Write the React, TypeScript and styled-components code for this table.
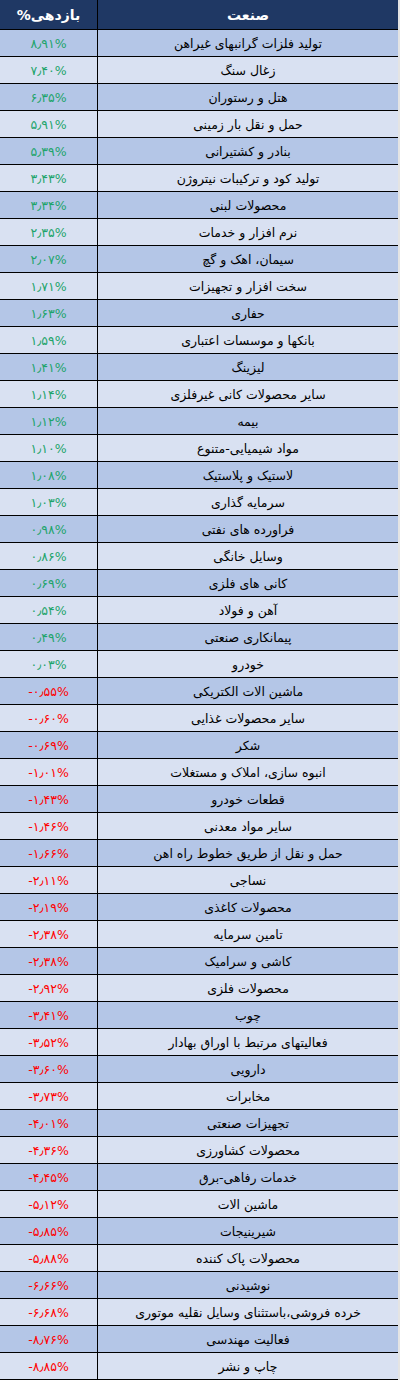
import styled, { createGlobalStyle } from "styled-components";

const rows: [string, number][] = [
  ["تولید فلزات گرانبهای غیراهن", 8.91],
  ["زغال سنگ", 7.4],
  ["هتل و رستوران", 6.35],
  ["حمل و نقل بار زمینی", 5.91],
  ["بنادر و کشتیرانی", 5.39],
  ["تولید کود و ترکیبات نیتروژن", 3.43],
  ["محصولات لبنی", 3.34],
  ["نرم افزار و خدمات", 2.35],
  ["سیمان، اهک و گچ", 2.07],
  ["سخت افزار و تجهیزات", 1.71],
  ["حفاری", 1.63],
  ["بانکها و موسسات اعتباری", 1.59],
  ["لیزینگ", 1.41],
  ["سایر محصولات کانی غیرفلزی", 1.14],
  ["بیمه", 1.12],
  ["مواد شیمیایی-متنوع", 1.1],
  ["لاستیک و پلاستیک", 1.08],
  ["سرمایه گذاری", 1.03],
  ["فراورده های نفتی", 0.98],
  ["وسایل خانگی", 0.86],
  ["کانی های فلزی", 0.69],
  ["آهن و فولاد", 0.54],
  ["پیمانکاری صنعتی", 0.49],
  ["خودرو", 0.03],
  ["ماشین الات الکتریکی", -0.55],
  ["سایر محصولات غذایی", -0.6],
  ["شکر", -0.69],
  ["انبوه سازی، املاک و مستغلات", -1.01],
  ["قطعات خودرو", -1.43],
  ["سایر مواد معدنی", -1.46],
  ["حمل و نقل از طریق خطوط راه اهن", -1.66],
  ["نساجی", -2.11],
  ["محصولات کاغذی", -2.19],
  ["تامین سرمایه", -2.38],
  ["کاشی و سرامیک", -2.38],
  ["محصولات فلزی", -2.92],
  ["چوب", -3.41],
  ["فعالیتهای مرتبط با اوراق بهادار", -3.52],
  ["دارویی", -3.6],
  ["مخابرات", -3.73],
  ["تجهیزات صنعتی", -4.01],
  ["محصولات کشاورزی", -4.36],
  ["خدمات رفاهی-برق", -4.45],
  ["ماشین الات", -5.12],
  ["شیرینیجات", -5.85],
  ["محصولات پاک کننده", -5.88],
  ["نوشیدنی", -6.66],
  ["خرده فروشی،باستثنای وسایل نقلیه موتوری", -6.68],
  ["فعالیت مهندسی", -8.76],
  ["چاپ و نشر", -8.85],
];

const faDigits = "۰۱۲۳۴۵۶۷۸۹";

function formatPct(v: number) {
  const s = Math.abs(v)
    .toFixed(2)
    .replace(/\d/g, (d) => faDigits[Number(d)])
    .replace(".", "٫");
  return `${v < 0 ? "-" : ""}${s}%`;
}

const GlobalStyle = createGlobalStyle`
  body {
    margin: 0;
    background: #fff;
  }
`;

const Table = styled.div`
  width: 398px;
  border-right: 2px solid #e4e4e4;
  font-family: "DejaVu Sans", sans-serif;
  font-size: 12.5px;
  color: #000;
`;

const Row = styled.div<{ $shade: "head" | "dark" | "light" }>`
  display: grid;
  grid-template-columns: 98px 1fr;
  height: ${(p) => (p.$shade === "head" ? "29px" : "26px")};
  border-bottom: 1px solid #000;
  background: ${(p) =>
    p.$shade === "head" ? "#1f3864" : p.$shade === "dark" ? "#b4c6e7" : "#d9e1f2"};
  color: ${(p) => (p.$shade === "head" ? "#fff" : "#000")};
  font-weight: ${(p) => (p.$shade === "head" ? 700 : 400)};
  font-size: ${(p) => (p.$shade === "head" ? "14px" : "inherit")};
`;

const ValueCell = styled.div<{ $neg?: boolean }>`
  display: flex;
  align-items: center;
  justify-content: center;
  border-right: 1px solid #000;
  direction: ltr;
  color: ${(p) => (p.$neg === undefined ? "inherit" : p.$neg ? "#ff0000" : "#1ea46b")};
`;

const HeadValue = styled(ValueCell)`
  direction: rtl;
`;

const NameCell = styled.div`
  display: flex;
  align-items: center;
  justify-content: center;
  direction: rtl;
  white-space: nowrap;
`;

export default function App() {
  return (
    <>
      <GlobalStyle />
      <Table>
        <Row $shade="head">
          <HeadValue>بازدهی%</HeadValue>
          <NameCell>صنعت</NameCell>
        </Row>
        {rows.map(([name, v], i) => (
          <Row key={name + i} $shade={i % 2 === 0 ? "dark" : "light"}>
            <ValueCell $neg={v < 0}>{formatPct(v)}</ValueCell>
            <NameCell>{name}</NameCell>
          </Row>
        ))}
      </Table>
    </>
  );
}
